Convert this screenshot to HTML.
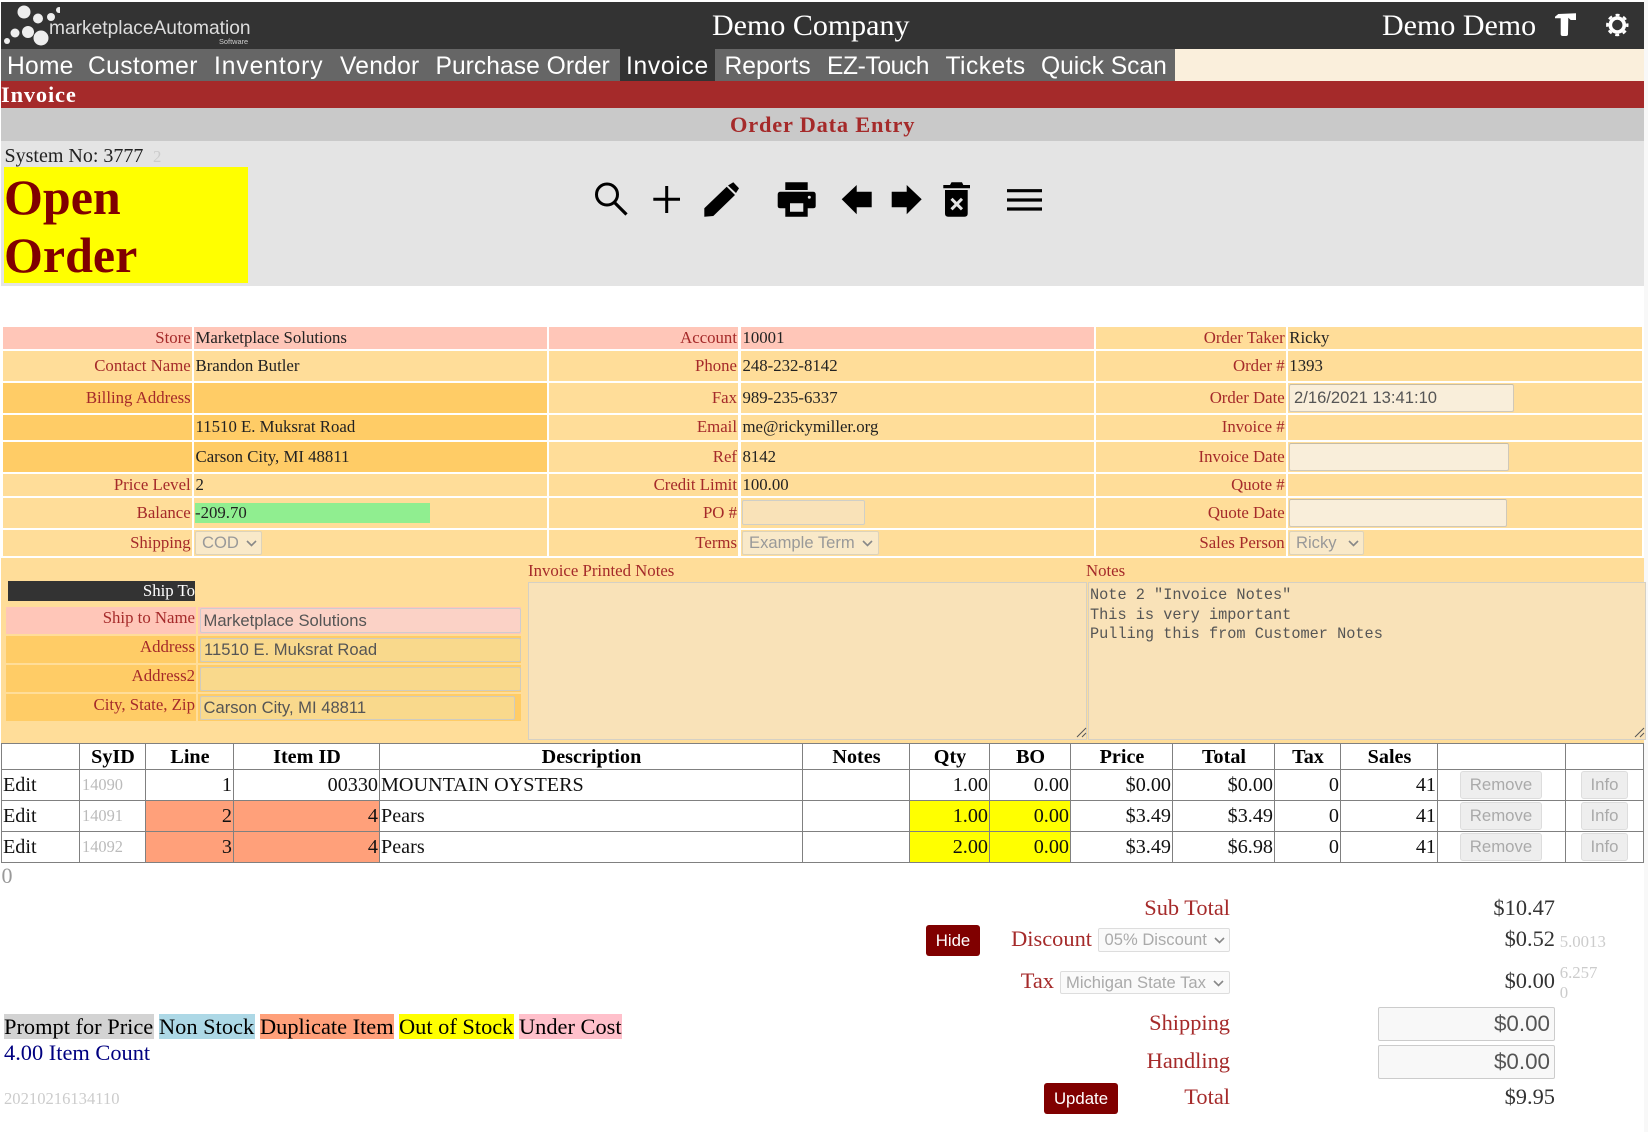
<!DOCTYPE html>
<html><head><meta charset="utf-8"><title>Invoice</title>
<style>
html,body{margin:0;padding:0;background:#fff}
body{position:relative;width:1648px;height:1132px;overflow:hidden;font-family:"Liberation Serif",serif;font-size:16.8px;color:#222}
.b{position:absolute}
.t{position:absolute;white-space:nowrap;line-height:1;top:calc(var(--b)*1px - .8375em)}
.s{font-family:"Liberation Sans",sans-serif;top:calc(var(--b)*1px - .8465em)}
.rw{position:absolute;left:0;width:1648px}
.c{position:absolute;top:0;bottom:0;white-space:nowrap;box-sizing:border-box}
.a1{left:3px;width:189px;padding-right:1.300px;text-align:right;color:#a52a2a}
.a2{left:194px;width:352.500px;padding-left:1.500px}
.a3{left:548.500px;width:189.700px;padding-right:1.200px;text-align:right;color:#a52a2a}
.a4{left:741px;width:353px;padding-left:1.500px}
.a5{left:1096px;width:190px;padding-right:1.300px;text-align:right;color:#a52a2a}
.a6{left:1288px;width:354px;padding-left:1.300px}
.o{background:#ffdd99}.d{background:#ffcc66}.p{background:#ffc6b8}
.in{position:absolute;box-sizing:border-box;border:1px solid #d0c8b8;border-top-color:#c6bca6;border-radius:2px;font-family:"Liberation Sans",sans-serif;font-size:16.600px;color:#555;white-space:nowrap}
.sel{position:absolute;box-sizing:border-box;border:1px solid #ddd3bb;border-radius:2px;background:#f9e9c9;font-family:"Liberation Sans",sans-serif;font-size:16.600px;color:#999;white-space:nowrap}
.sel svg{position:absolute;top:50%;margin-top:-3px}
.btn{position:absolute;box-sizing:border-box;border:1px solid #ddd;border-radius:3px;background:#eee;color:#aaa;text-align:center;font-family:"Liberation Sans",sans-serif;font-size:16.800px;line-height:25px}
.red{position:absolute;box-sizing:border-box;border-radius:3px;background:#800000;color:#fff;text-align:center;font-family:"Liberation Sans",sans-serif;font-size:16.800px}
table{position:absolute;left:1px;top:743px;width:1642px;table-layout:fixed;border-collapse:collapse;font-size:20.160px;color:#111;background:#fff}
td,th{border:1px solid #808080;padding:0 1px 0 2px;white-space:nowrap;line-height:1;overflow:hidden}
th{color:#000;height:23px;padding-top:2px}
td{height:30px;text-align:right}
td.l{text-align:left;padding-left:1px}
td.g{text-align:left;color:#bbb;font-size:16.400px}
.sa{background:#ffa07a}.ye{background:#ff0}
</style></head><body>

<div class="b" style="left:1644px;top:0;width:4px;height:1132px;background:#f8f8f8"></div>

<!-- header -->
<div class="b" style="left:1px;top:2px;width:1643px;height:47px;background:#333"></div>
<svg class="b" style="left:0;top:0" width="60" height="50" fill="#eee">
<circle cx="24" cy="12" r="6.500"/><circle cx="38" cy="18.500" r="5"/><circle cx="51" cy="17" r="4"/><circle cx="59" cy="10" r="3"/><circle cx="41" cy="38" r="7.500"/><circle cx="28" cy="32" r="6"/><circle cx="15" cy="33" r="4.500"/><circle cx="7" cy="41" r="3"/>
</svg>
<div class="t s" style="--b:35;left:49px;font-size:19.200px;color:#ddd">marketplaceAutomation</div>
<div class="t s" style="--b:44;left:219px;font-size:7.400px;color:#ccc">Software</div>
<div class="t" style="--b:36;left:712px;font-size:30px;color:#fff">Demo Company</div>
<div class="t" style="--b:36;left:1382px;font-size:30px;color:#fff">Demo Demo</div>
<svg class="b" style="left:1550px;top:8px" width="90" height="34" fill="#fff">
<path d="M5 8.700L8.300 6 26 5.300V12H20.700L18.300 9.700 18 26Q18 28 16 28H12.700Q10.700 28 10.700 26V10.300H5Z"/>
<circle cx="67.300" cy="17" r="7" fill="none" stroke="#fff" stroke-width="3.600"/>
<circle cx="67.300" cy="17" r="10" fill="none" stroke="#fff" stroke-width="2.400" stroke-dasharray="4 3.850" stroke-dashoffset="2"/>
</svg>

<!-- nav -->
<div class="b" style="left:1px;top:49px;width:1173.500px;height:32px;background:#666"></div>
<div class="b" style="left:1174.500px;top:49px;width:469.500px;height:32px;background:#faefdc"></div>
<div class="b" style="left:620px;top:49px;width:94.600px;height:32px;background:#333"></div>
<div class="t s" style="--b:75.500;left:7px;font-size:24.600px;color:#fff;letter-spacing:.25px">Home</div>
<div class="t s" style="--b:75.500;left:88px;font-size:24.600px;color:#fff;letter-spacing:.4px">Customer</div>
<div class="t s" style="--b:75.500;left:214px;font-size:24.600px;color:#fff;letter-spacing:.93px">Inventory</div>
<div class="t s" style="--b:75.500;left:340px;font-size:24.600px;color:#fff;letter-spacing:.25px">Vendor</div>
<div class="t s" style="--b:75.500;left:435.500px;font-size:24.600px;color:#fff;letter-spacing:.05px">Purchase Order</div>
<div class="t s" style="--b:75.500;left:626px;font-size:24.600px;color:#fff;letter-spacing:.7px">Invoice</div>
<div class="t s" style="--b:75.500;left:724.500px;font-size:24.600px;color:#fff">Reports</div>
<div class="t s" style="--b:75.500;left:827px;font-size:24.600px;color:#fff;letter-spacing:-.4px">EZ-Touch</div>
<div class="t s" style="--b:75.500;left:945.500px;font-size:24.600px;color:#fff;letter-spacing:.45px">Tickets</div>
<div class="t s" style="--b:75.500;left:1041px;font-size:24.600px;color:#fff">Quick Scan</div>

<!-- bars -->
<div class="b" style="left:1px;top:81px;width:1643px;height:27px;background:#a52a2a"></div>
<div class="t" style="--b:102.500;left:1px;font-size:22.400px;font-weight:bold;color:#fff;letter-spacing:.85px">Invoice</div>
<div class="b" style="left:1px;top:108px;width:1643px;height:33px;background:#c9c9c9"></div>
<div class="t" style="--b:132.500;left:730px;font-size:22.400px;font-weight:bold;color:#a52a2a;letter-spacing:.8px">Order Data Entry</div>
<div class="b" style="left:1px;top:141px;width:1643px;height:145px;background:#e4e4e4"></div>
<div class="t" style="--b:163;left:4.500px;font-size:20px;color:#222">System No: 3777</div>
<div class="t" style="--b:163;left:153px;font-size:16.800px;color:#ccc">2</div>
<div class="b" style="left:4px;top:167px;width:244px;height:116px;background:#ff0"></div>
<div class="t" style="--b:214;left:4px;font-size:50px;font-weight:bold;color:#800000">Open</div>
<div class="t" style="--b:272;left:4px;font-size:50px;font-weight:bold;color:#800000">Order</div>

<!-- toolbar icons -->
<svg class="b" style="left:570px;top:165px" width="490" height="70" fill="#000">
<circle cx="37" cy="29.500" r="10.500" fill="none" stroke="#000" stroke-width="3"/>
<path d="M45 38L56.500 49.500" stroke="#000" stroke-width="3.200" fill="none"/>
<path d="M83.300 34.300H110M96.700 21V48" stroke="#000" stroke-width="3" fill="none"/>
<path d="M134.300 43.300L156.700 21.700 165 30 143.300 51 134.300 51.700Z"/>
<path d="M158 20.500L163.300 17.300 169 23.300 166 28Z"/>
<path d="M215.300 17.300H237.700V25H215.300Z"/>
<path fill-rule="evenodd" d="M210.500 26.700H243Q245.700 26.700 245.700 29.500V41Q245.700 43.300 243 43.300H237.700V51.700H215.300V43.300H210.500Q207.700 43.300 207.700 41V29.500Q207.700 26.700 210.500 26.700ZM220 38.300V46.700H233.300V38.300Z"/>
<circle cx="239.300" cy="32.300" r="1.500" fill="#e4e4e4"/>
<path d="M271.700 34.300L286.700 20V26.700H301.700V42.300H286.700V49.300Z"/>
<path d="M351.700 34.300L336.700 20V26.700H321.700V42.300H336.700V49.300Z"/>
<path d="M380 20L381.500 17.300H392L393.300 20H400V23.300H373.300V20Z"/>
<path d="M375 25H397.700V48.500Q397.700 51.700 394.500 51.700H378.200Q375 51.700 375 48.500Z"/>
<path d="M381.500 33.800L392 44.300M392 33.800L381.500 44.300" stroke="#e4e4e4" stroke-width="3" fill="none"/>
<path d="M437 25.700H472M437 35H472M437 44H472" stroke="#000" stroke-width="3.200" fill="none"/>
</svg>

<!-- form rows -->
<div class="rw" style="top:327px;height:22px;line-height:22px">
<div class="c a1 p">Store</div><div class="c a2 p">Marketplace Solutions</div><div class="c a3 p">Account</div><div class="c a4 p">10001</div><div class="c a5 o">Order Taker</div><div class="c a6 o">Ricky</div></div>
<div class="rw" style="top:351px;height:30px;line-height:30px">
<div class="c a1 o">Contact Name</div><div class="c a2 o">Brandon Butler</div><div class="c a3 o">Phone</div><div class="c a4 o">248-232-8142</div><div class="c a5 o">Order #</div><div class="c a6 o">1393</div></div>
<div class="rw" style="top:383px;height:30px;line-height:30px">
<div class="c a1 d">Billing Address</div><div class="c a2 d"></div><div class="c a3 o">Fax</div><div class="c a4 o">989-235-6337</div><div class="c a5 o">Order Date</div><div class="c a6 o"></div></div>
<div class="rw" style="top:415px;height:25px;line-height:24px">
<div class="c a1 d"></div><div class="c a2 d">11510 E. Muksrat Road</div><div class="c a3 o">Email</div><div class="c a4 o">me@rickymiller.org</div><div class="c a5 o">Invoice #</div><div class="c a6 o"></div></div>
<div class="rw" style="top:442px;height:30px;line-height:30px">
<div class="c a1 d"></div><div class="c a2 d">Carson City, MI 48811</div><div class="c a3 o">Ref</div><div class="c a4 o">8142</div><div class="c a5 o">Invoice Date</div><div class="c a6 o"></div></div>
<div class="rw" style="top:474px;height:22px;line-height:22px">
<div class="c a1 o">Price Level</div><div class="c a2 o">2</div><div class="c a3 o">Credit Limit</div><div class="c a4 o">100.00</div><div class="c a5 o">Quote #</div><div class="c a6 o"></div></div>
<div class="rw" style="top:498px;height:30px;line-height:30px">
<div class="c a1 o">Balance</div><div class="c a2 o"></div><div class="c a3 o">PO #</div><div class="c a4 o"></div><div class="c a5 o">Quote Date</div><div class="c a6 o"></div></div>
<div class="rw" style="top:530px;height:26px;line-height:26px">
<div class="c a1 o">Shipping</div><div class="c a2 o"></div><div class="c a3 o">Terms</div><div class="c a4 o"></div><div class="c a5 o">Sales Person</div><div class="c a6 o"></div></div>

<div class="b" style="left:195px;top:503px;width:235px;height:20px;line-height:20px;background:#90ee90">-209.70</div>
<div class="in" style="left:1289px;top:384px;width:224.500px;height:28px;line-height:26px;background:#f9eeda;padding-left:4px">2/16/2021 13:41:10</div>
<div class="in" style="left:1289px;top:443px;width:220px;height:28px;background:#f9eeda"></div>
<div class="in" style="left:1289px;top:499px;width:218px;height:28px;background:#f9eeda"></div>
<div class="in" style="left:742px;top:500px;width:122.500px;height:25px;background:#f9e2b8;border-color:#cfcfc8"></div>

<div class="sel" style="left:195px;top:531px;width:67px;height:24px;line-height:22px;padding-left:6px">COD<svg style="left:50px" width="11" height="7"><path d="M1 1l4.500 4.500L10 1" fill="none" stroke="#888" stroke-width="1.600"/></svg></div>
<div class="sel" style="left:742px;top:531px;width:137px;height:24px;line-height:22px;padding-left:6px">Example Term<svg style="left:119px" width="11" height="7"><path d="M1 1l4.500 4.500L10 1" fill="none" stroke="#888" stroke-width="1.600"/></svg></div>
<div class="sel" style="left:1289px;top:531px;width:75px;height:24px;line-height:22px;padding-left:6px">Ricky<svg style="left:58px" width="11" height="7"><path d="M1 1l4.500 4.500L10 1" fill="none" stroke="#888" stroke-width="1.600"/></svg></div>

<!-- lower form block -->
<div class="b" style="left:1px;top:558px;width:1643px;height:185px;background:#ffdd99"></div>
<div class="t" style="--b:577;left:528px;color:#a52a2a">Invoice Printed Notes</div>
<div class="t" style="--b:577;left:1086px;color:#a52a2a">Notes</div>
<div class="b" style="left:528px;top:581.500px;width:559px;height:158px;box-sizing:border-box;background:#f9e2b8;border:1px solid #d5d0c4"></div>
<div class="b" style="left:1087.500px;top:581.500px;width:558.500px;height:158px;box-sizing:border-box;background:#f9e2b8;border:1px solid #d5d0c4"></div>
<svg class="b" style="left:1076px;top:727px" width="11" height="11"><path d="M1 10L10 1M6 10L10 6" stroke="#555" stroke-width="1" fill="none"/></svg>
<svg class="b" style="left:1634px;top:727px" width="11" height="11"><path d="M1 10L10 1M6 10L10 6" stroke="#555" stroke-width="1" fill="none"/></svg>
<div class="t" style="left:1090px;font-family:'Liberation Mono',monospace;font-size:15.250px;color:#555;top:calc(601px - .83em)">Note 2 "Invoice Notes"</div>
<div class="t" style="left:1090px;font-family:'Liberation Mono',monospace;font-size:15.250px;color:#555;top:calc(620.500px - .83em)">This is very important</div>
<div class="t" style="left:1090px;font-family:'Liberation Mono',monospace;font-size:15.250px;color:#555;top:calc(639.500px - .83em)">Pulling this from Customer Notes</div>

<div class="b" style="left:8px;top:581px;width:187px;height:20px;background:#333"></div>
<div class="t" style="--b:597;right:1453px;color:#fff">Ship To</div>

<div class="b p" style="left:6px;top:607px;width:190px;height:27px"></div>
<div class="b p" style="left:198px;top:607px;width:323px;height:27px"></div>
<div class="t" style="--b:624;right:1453px;color:#a52a2a">Ship to Name</div>
<div class="in" style="left:199.500px;top:608px;width:321px;height:25px;line-height:23px;background:#fbd2c6;border-color:#cfcbd0;padding-left:3px">Marketplace Solutions</div>

<div class="b d" style="left:6px;top:636px;width:190px;height:27px"></div>
<div class="b d" style="left:198px;top:636px;width:323px;height:27px"></div>
<div class="t" style="--b:653;right:1453px;color:#a52a2a">Address</div>
<div class="in" style="left:199.500px;top:637.500px;width:321px;height:24.500px;line-height:22px;background:#f9d98c;border-color:#cfcbbf;padding-left:3.500px">11510 E. Muksrat Road</div>

<div class="b d" style="left:6px;top:665px;width:190px;height:27px"></div>
<div class="b d" style="left:198px;top:665px;width:323px;height:27px"></div>
<div class="t" style="--b:682;right:1453px;color:#a52a2a">Address2</div>
<div class="in" style="left:199.500px;top:666.500px;width:321px;height:24.500px;background:#f9d98c;border-color:#cfcbbf"></div>

<div class="b d" style="left:6px;top:694px;width:190px;height:27px"></div>
<div class="b d" style="left:198px;top:694px;width:323px;height:27px"></div>
<div class="t" style="--b:711.500;right:1453px;color:#a52a2a">City, State, Zip</div>
<div class="in" style="left:199.500px;top:695.500px;width:315.500px;height:24.500px;line-height:22px;background:#f9d98c;border-color:#cfcbbf;padding-left:3px">Carson City, MI 48811</div>

<!-- items table -->
<table>
<colgroup><col style="width:78px"><col style="width:66px"><col style="width:88px"><col style="width:146px"><col style="width:423px"><col style="width:107px"><col style="width:80px"><col style="width:81px"><col style="width:102px"><col style="width:102px"><col style="width:66px"><col style="width:97px"><col style="width:128px"><col style="width:78px"></colgroup>
<tr><th></th><th>SyID</th><th>Line</th><th>Item ID</th><th>Description</th><th>Notes</th><th>Qty</th><th>BO</th><th>Price</th><th>Total</th><th>Tax</th><th>Sales</th><th></th><th></th></tr>
<tr><td class="l">Edit</td><td class="g">14090</td><td>1</td><td>00330</td><td class="l">MOUNTAIN OYSTERS</td><td></td><td>1.00</td><td>0.00</td><td>$0.00</td><td>$0.00</td><td>0</td><td>41</td><td></td><td></td></tr>
<tr><td class="l">Edit</td><td class="g">14091</td><td class="sa">2</td><td class="sa">4</td><td class="l">Pears</td><td></td><td class="ye">1.00</td><td class="ye">0.00</td><td>$3.49</td><td>$3.49</td><td>0</td><td>41</td><td></td><td></td></tr>
<tr><td class="l">Edit</td><td class="g">14092</td><td class="sa">3</td><td class="sa">4</td><td class="l">Pears</td><td></td><td class="ye">2.00</td><td class="ye">0.00</td><td>$3.49</td><td>$6.98</td><td>0</td><td>41</td><td></td><td></td></tr>
</table>
<div class="btn" style="left:1460px;top:771px;width:82px;height:28px">Remove</div>
<div class="btn" style="left:1581px;top:771px;width:47px;height:28px">Info</div>
<div class="btn" style="left:1460px;top:802px;width:82px;height:28px">Remove</div>
<div class="btn" style="left:1581px;top:802px;width:47px;height:28px">Info</div>
<div class="btn" style="left:1460px;top:833px;width:82px;height:28px">Remove</div>
<div class="btn" style="left:1581px;top:833px;width:47px;height:28px">Info</div>

<div class="t" style="--b:883;left:1.500px;font-size:22px;color:#999">0</div>

<!-- legend -->
<div class="b" style="left:4px;top:1014px;width:150px;height:25px;background:#d3d3d3"></div>
<div class="b" style="left:159px;top:1014px;width:96px;height:25px;background:#add8e6"></div>
<div class="b" style="left:260px;top:1014px;width:134px;height:25px;background:#ffa07a"></div>
<div class="b" style="left:399px;top:1014px;width:115px;height:25px;background:#ff0"></div>
<div class="b" style="left:519px;top:1014px;width:103px;height:25px;background:#ffc0cb"></div>
<div class="t" style="--b:1035;left:4px;font-size:22.400px;color:#000">Prompt for Price</div>
<div class="t" style="--b:1035;left:159px;font-size:22.400px;color:#000">Non Stock</div>
<div class="t" style="--b:1035;left:260px;font-size:22.400px;color:#000">Duplicate Item</div>
<div class="t" style="--b:1035;left:399px;font-size:22.400px;color:#000">Out of Stock</div>
<div class="t" style="--b:1035;left:519px;font-size:22.400px;color:#000">Under Cost</div>
<div class="t" style="--b:1061;left:4px;font-size:22.400px;color:#000080">4.00 Item Count</div>
<div class="t" style="--b:1105;left:4px;font-size:16.600px;color:#ccc">20210216134110</div>

<!-- totals -->
<div class="t" style="--b:916;right:418px;font-size:22.400px;color:#a52a2a">Sub Total</div>
<div class="t" style="--b:916;right:93px;font-size:22.400px;color:#333">$10.47</div>
<div class="red" style="left:926px;top:925px;width:54px;height:31px;line-height:31px">Hide</div>
<div class="t" style="--b:946.500;right:556px;font-size:22.400px;color:#a52a2a">Discount</div>
<div class="sel" style="left:1098px;top:928px;width:132px;height:24px;line-height:22px;padding-left:5.500px;background:#fafafa;border-color:#ddd;color:#aaa">05% Discount<svg style="left:115px" width="11" height="7"><path d="M1 1l4.500 4.500L10 1" fill="none" stroke="#888" stroke-width="1.600"/></svg></div>
<div class="t" style="--b:947;right:93px;font-size:22.400px;color:#333">$0.52</div>
<div class="t" style="--b:948;left:1559.700px;color:#ccc">5.0013</div>
<div class="t" style="--b:989;right:594px;font-size:22.400px;color:#a52a2a">Tax</div>
<div class="sel" style="left:1060px;top:971px;width:170px;height:23px;line-height:21px;padding-left:5px;background:#fafafa;border-color:#ddd;color:#aaa">Michigan State Tax<svg style="left:152px" width="11" height="7"><path d="M1 1l4.500 4.500L10 1" fill="none" stroke="#888" stroke-width="1.600"/></svg></div>
<div class="t" style="--b:989;right:93px;font-size:22.400px;color:#333">$0.00</div>
<div class="t" style="--b:979;left:1559.700px;color:#ccc">6.257</div>
<div class="t" style="--b:999;left:1559.700px;color:#ccc">0</div>
<div class="t" style="--b:1031;right:418px;font-size:22.400px;color:#a52a2a">Shipping</div>
<div class="in" style="left:1378px;top:1007px;width:177px;height:34px;line-height:32px;background:#f8f8f8;border-color:#ccc;font-size:22.400px;text-align:right;padding-right:4px">$0.00</div>
<div class="t" style="--b:1069;right:418px;font-size:22.400px;color:#a52a2a">Handling</div>
<div class="in" style="left:1378px;top:1045px;width:177px;height:34px;line-height:32px;background:#f8f8f8;border-color:#ccc;font-size:22.400px;text-align:right;padding-right:4px">$0.00</div>
<div class="red" style="left:1044px;top:1083px;width:74px;height:31px;line-height:31px">Update</div>
<div class="t" style="--b:1105;right:418px;font-size:22.400px;color:#a52a2a">Total</div>
<div class="t" style="--b:1105;right:93px;font-size:22.400px;color:#333">$9.95</div>

</body></html>
